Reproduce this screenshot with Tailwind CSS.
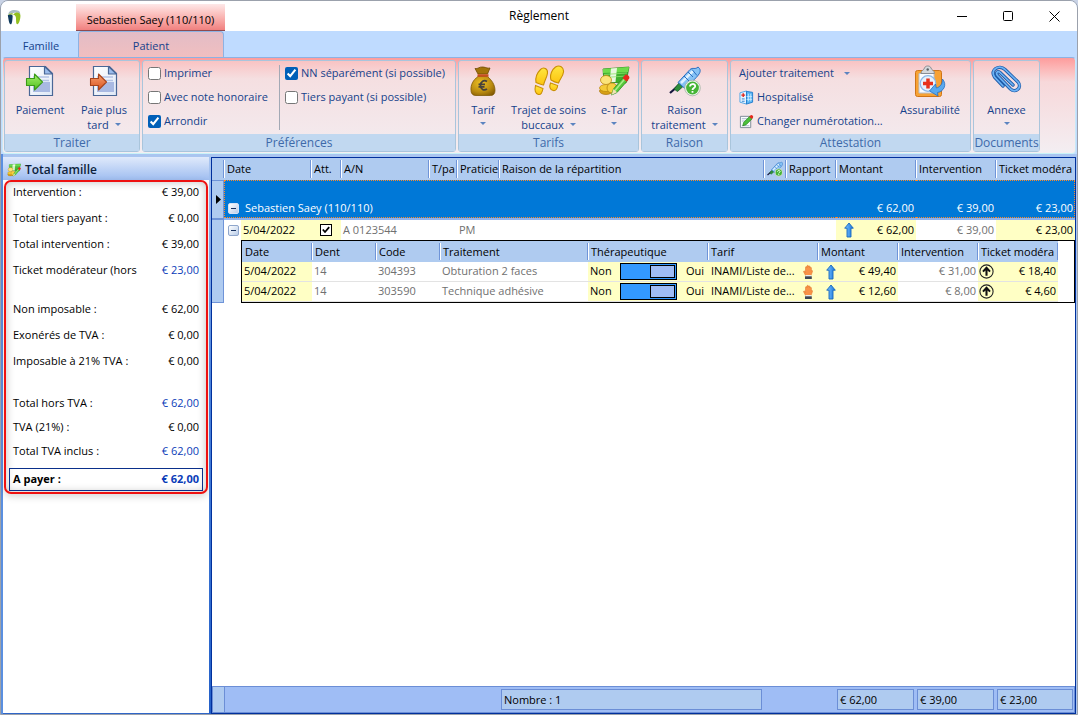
<!DOCTYPE html>
<html lang="fr">
<head>
    <meta charset="UTF-8">
    <meta name="viewport" content="width=device-width, initial-scale=1.0">
    <title>Règlement</title>
    <script src="https://cdn.jsdelivr.net/npm/@tailwindcss/browser@4"></script>
</head>
<body class="h-screen overflow-hidden bg-[#c9d3e6] font-['Open_Sans','Noto_Sans',sans-serif] text-[11px] text-black">

<!-- Shared icons -->
<svg class="absolute size-0">
    <defs>
        <linearGradient id="g-paper" x1="0" y1="0" x2="1" y2="1"><stop offset="0" stop-color="#fff"/><stop offset="1" stop-color="#dfe8f6"/></linearGradient>
        <linearGradient id="g-green" x1="0" y1="0" x2="0" y2="1"><stop offset="0" stop-color="#a6f06c"/><stop offset="1" stop-color="#4fc01e"/></linearGradient>
        <linearGradient id="g-orange" x1="0" y1="0" x2="0" y2="1"><stop offset="0" stop-color="#f9a070"/><stop offset="1" stop-color="#d9531f"/></linearGradient>
        <linearGradient id="g-blue" x1="0" y1="0" x2="1" y2="0"><stop offset="0" stop-color="#7cc4ff"/><stop offset="1" stop-color="#1673dc"/></linearGradient>
        <radialGradient id="g-bag" cx=".4" cy=".35" r=".8"><stop offset="0" stop-color="#edc024"/><stop offset=".6" stop-color="#b98a10"/><stop offset="1" stop-color="#7d5502"/></radialGradient>
        <linearGradient id="g-foot" x1="0" y1="0" x2="0" y2="1"><stop offset="0" stop-color="#ffe640"/><stop offset="1" stop-color="#fdc410"/></linearGradient>
    </defs>
    <symbol id="i-doc" viewBox="0 0 32 32">
        <path d="M5.500 1.500h16l7 7v22h-23z" fill="url(#g-paper)" stroke="#4a6796" stroke-width="1.200"/>
        <path d="M9 12h16M9 15.500h16" stroke="#b4c4e6" stroke-width="1.500"/>
        <path d="M9 17h17v10H9z" fill="#a9b9e2"/>
        <path d="M20.500 1.500v7.500h8z" fill="#9bbcec" stroke="#4a6796" stroke-width="1.200" stroke-linejoin="round"/>
    </symbol>
    <symbol id="i-arrow" viewBox="0 0 32 32">
        <path d="M2.500 13.500h8v-4.500l8 8-8 8v-4.500h-8z" stroke-width="1.100" stroke-linejoin="round"/>
    </symbol>
    <symbol id="i-money" viewBox="0 0 32 32">
        <path d="M5 4l26-2-3 16-22-1z" fill="#3daf2d" stroke="#25861c" stroke-width=".8"/>
        <path d="M5 4l26-2-1 5-25 1z" fill="#6ddb4b"/>
        <path d="M13 3.500l6-.5-1.500 14h-6z" fill="#e9f8df"/>
        <path d="M6 9.500l23-1.500M6 12.500l23-1.500" stroke="#8be06b" stroke-width=".8"/>
        <ellipse cx="8" cy="26" rx="6.500" ry="3.500" fill="#d79f14" stroke="#a8750a" stroke-width=".7"/>
        <ellipse cx="8" cy="23" rx="6.500" ry="3.500" fill="#f4cb38" stroke="#b8860c" stroke-width=".7"/>
        <ellipse cx="8" cy="15" rx="5.500" ry="4.500" fill="#fbe47a" stroke="#bd8a10" stroke-width=".8"/>
        <ellipse cx="14" cy="23" rx="5" ry="5" fill="#f6cf40" stroke="#b8860c" stroke-width=".8"/>
        <path d="M13.500 30l2-6 10.500-12.500 4 3.500-11 12.500z" fill="#57c83a" stroke="#2f8f22" stroke-width=".8"/>
        <path d="M17 25.500l10.500-12.500" stroke="#a9ef8c" stroke-width="1.500"/>
        <path d="M24.500 13l2.500-3c1.500-1.500 5.500 1.500 4.200 3.500l-2.500 3.200z" fill="#e5291d"/>
        <path d="M13.500 30l2-6 3.500 3.200z" fill="#f4e1b5"/>
    </symbol>
    <symbol id="i-syringe" viewBox="0 0 32 32">
        <path d="M1 28l8-7" stroke="#14143c" stroke-width="2.200"/>
        <path d="M5 24l5-6 4 3.500-5.500 5z" fill="#2d8f3a" stroke="#14532a" stroke-width=".8"/>
        <path d="M9 17.500L21 4.500c3-2.500 5 .5 8-2.500 3 2 2.500 5 1 7-1 2.500-14 14.500-14 14.500z" fill="#86c2f5" stroke="#2b6fc0" stroke-width="1"/>
        <path d="M12 18L24 6" stroke="#dff1ff" stroke-width="2.500"/>
        <path d="M19 7l5 5M23 4.500l5 6M15 11l5 5" stroke="#2b6fc0" stroke-width="1"/>
        <circle cx="23.500" cy="23" r="7.800" fill="#eef5ec" stroke="#9aa99a" stroke-width=".7"/>
        <circle cx="23.500" cy="23" r="6.400" fill="#46b536"/>
        <path d="M21 21.500c0-3.300 5.200-3.200 5.200-.3 0 1.800-2.700 1.800-2.700 3.700M23.500 26v1.800" stroke="#fff" stroke-width="1.800" fill="none"/>
    </symbol>
    <symbol id="i-up" viewBox="0 0 10 16">
        <path d="M5 1l4.300 5.200H7V15H3V6.200H.7z" fill="url(#g-blue)" stroke="#1766bd" stroke-width=".9" stroke-linejoin="round"/>
    </symbol>
    <symbol id="i-circle" viewBox="0 0 15 15">
        <circle cx="7.500" cy="7.500" r="6.600" fill="none" stroke="#222" stroke-width="1.100"/>
        <path d="M7.500 11.800V4M4 7.600l3.500-3.700L11 7.600" fill="none" stroke="#111" stroke-width="2.100"/>
    </symbol>
    <symbol id="i-hand" viewBox="0 0 10 16">
        <path d="M2.500 11.500L.7 8c-.5-1.100.8-1.500 1.300-.5l.5.800V3.500c0-1.200 1.300-1.200 1.400 0V2.300c.1-1.300 1.500-1.300 1.600 0v.4c.1-1.100 1.500-1.100 1.500.1v1.100c.2-1 1.400-1 1.400.2v3c.5-.9 1.400-.5 1.100.4L8 11.500z" fill="#f99347" stroke="#dc6c26" stroke-width=".5"/>
        <path d="M2.500 11h5.800v1.500H2.500z" fill="#e8edf2"/>
        <path d="M2 12.300h6.800V15H2z" fill="#3d4655"/>
    </symbol>
</svg>

<div class="flex h-full flex-col overflow-hidden rounded-t-lg border border-[#9ba1ac] bg-[#bfdbff]">

    <!-- Title bar -->
    <header class="relative flex h-[30px] shrink-0 items-stretch bg-white">
        <div class="w-[75px] shrink-0 pt-[7px] pl-1">
            <svg class="size-[18px]" viewBox="0 0 16 16">
                <path d="M3 5.500C3 2.500 7.500.5 12 2.500c1.500 1 1.500 2 1.500 3C11.500 3.500 8 4 3 5.500z" fill="#a9bcc4"/>
                <path d="M2.500 6.500c1.500-1.800 4.500-1 4.300 1S6.500 14.500 5 14.500 3 9 2.500 6.500z" fill="#103a5c"/>
                <path d="M2.800 6.500C4 4 7 4 8 6 6.500 5.200 4.500 5.200 2.800 6.500z" fill="#93c01f"/>
                <path d="M7.500 5.500c2-2.200 6-2 6.200 1S12.500 14.500 11 14.500s-1-4-1.300-6S8.500 6.500 7.500 5.500z" fill="#93c01f"/>
            </svg>
        </div>
        <div class="mt-[3px] flex w-[149px] items-center justify-center border-b border-[#8f4a4f] bg-linear-to-b from-[#fde8e8] to-[#f0807f] pt-1.5">Sebastien Saey (110/110)</div>
        <h1 class="pointer-events-none absolute inset-x-0 top-0 text-center text-xs leading-[30px]">Règlement</h1>
        <div class="ml-auto flex">
            <button aria-label="Réduire" class="flex w-[46px] items-center justify-center"><svg class="size-[11px]" viewBox="0 0 11 11"><path d="M0 5.500h10" stroke="#000"/></svg></button>
            <button aria-label="Agrandir" class="flex w-[46px] items-center justify-center"><svg class="size-[11px]" viewBox="0 0 11 11"><rect x=".5" y=".5" width="9" height="9" rx="1" fill="none" stroke="#000"/></svg></button>
            <button aria-label="Fermer" class="flex w-[46px] items-center justify-center"><svg class="size-[11px]" viewBox="0 0 11 11"><path d="M.5.500l10 10M10.500.500l-10 10" stroke="#000"/></svg></button>
        </div>
    </header>

    <!-- Ribbon tabs -->
    <nav class="flex h-[26px] shrink-0 items-stretch text-[11px] text-[#15428b]">
        <button class="w-20 pt-1 text-center">Famille</button>
        <button class="-ml-[3px] w-[146px] rounded-t border border-b-0 border-[#8db2e3] bg-linear-to-b from-[#e2bcc6] to-[#f1bfc0] pt-[3px]">Patient</button>
    </nav>

    <!-- Ribbon -->
    <div class="mx-px flex shrink-0 gap-0.5 rounded border border-t-[#8db2e3] border-r-[#c9e9f6] border-b-[#c9f3f8] border-l-[#c9e9f6] bg-linear-to-b from-[#fd9c9c] via-[#f7d8da] via-25% to-[#f3eef2] px-px pt-0.5 pb-px text-[#15428b]">

        <section class="flex w-[136px] flex-col rounded-[3px] border border-[#a9c5dc] bg-linear-to-b from-[#f9c3c3] via-[#f5dfe1] via-20% to-[#f3ecf0]">
            <div class="flex h-[73px] justify-center pt-1">
                <button class="flex w-16 flex-col items-center leading-[15px]">
                    <svg class="mb-[5px] size-8"><use href="#i-doc"/><use href="#i-arrow" fill="url(#g-green)" stroke="#3b9a18"/></svg>
                    Paiement
                </button>
                <button class="flex w-16 flex-col items-center leading-[15px]">
                    <svg class="mb-[5px] size-8"><use href="#i-doc"/><use href="#i-arrow" fill="url(#g-orange)" stroke="#a8431a"/></svg>
                    Paie plus
                    <span class="flex items-center gap-1.5">tard <i class="border-x-[3px] border-t-[3px] border-x-transparent border-t-[#5b84c0]"></i></span>
                </button>
            </div>
            <h2 class="bg-[#c1d8f0] text-center text-xs leading-[17px] text-[#3e6aaa]">Traiter</h2>
        </section>

        <section class="flex w-[314px] flex-col rounded-[3px] border border-[#a9c5dc] bg-linear-to-b from-[#f9c3c3] via-[#f5dfe1] via-20% to-[#f3ecf0]">
            <div class="flex h-[73px] gap-[5px] pl-[5px]">
                <div class="w-[126px]">
                    <label class="flex h-6 items-center gap-[3px]"><input type="checkbox" class="size-[13px] accent-[#005fb8]">Imprimer</label>
                    <label class="flex h-6 items-center gap-[3px] whitespace-nowrap"><input type="checkbox" class="size-[13px] accent-[#005fb8]">Avec note honoraire</label>
                    <label class="flex h-6 items-center gap-[3px]"><input type="checkbox" checked class="size-[13px] accent-[#005fb8]">Arrondir</label>
                </div>
                <div class="my-1 w-px bg-[#a3a9b5]"></div>
                <div>
                    <label class="flex h-6 items-center gap-[3px] whitespace-nowrap"><input type="checkbox" checked class="size-[13px] accent-[#005fb8]">NN séparément (si possible)</label>
                    <label class="flex h-6 items-center gap-[3px] whitespace-nowrap"><input type="checkbox" class="size-[13px] accent-[#005fb8]">Tiers payant (si possible)</label>
                </div>
            </div>
            <h2 class="bg-[#c1d8f0] text-center text-xs leading-[17px] text-[#3e6aaa]">Préférences</h2>
        </section>

        <section class="flex w-[181px] flex-col rounded-[3px] border border-[#a9c5dc] bg-linear-to-b from-[#f9c3c3] via-[#f5dfe1] via-20% to-[#f3ecf0]">
            <div class="flex h-[73px] justify-center pt-1">
                <button class="flex w-12 flex-col items-center leading-[15px]">
                    <svg class="mb-[5px] size-8" viewBox="0 0 32 32">
                        <path d="M11 9L8 3.500c3 .8 4-2 8-1.500s4 1.500 7 1L20.500 9z" fill="#a37409" stroke="#6f4a02" stroke-width=".8"/>
                        <path d="M11 11.500C6 15 3.500 20 4 25.500c.3 4 2.500 5 5 5h14.500c3 0 4.500-2 4.500-5 0-6-3.500-10.500-7.500-14z" fill="url(#g-bag)" stroke="#805a05" stroke-width=".8"/>
                        <path d="M10.500 9.300h11v2.500h-11z" fill="#c8501d"/>
                        <path d="M20 16.500c-3-2-6.500 0-6.500 4s3.500 5.500 6.500 3.500M11.500 19.300H18M11.500 21.800H17.500" fill="none" stroke="#46413c" stroke-width="1.800"/>
                    </svg>
                    Tarif
                    <i class="mt-[5px] border-x-[3px] border-t-[3px] border-x-transparent border-t-[#5b84c0]"></i>
                </button>
                <button class="flex w-[84px] flex-col items-center leading-[15px] whitespace-nowrap">
                    <svg class="mb-[5px] size-8" viewBox="0 0 32 32">
                        <g fill="url(#g-foot)" stroke="#c98f06" stroke-width="1.100">
                            <path d="M7.500 4.500c3-3 7.500-1 7 3.500-.4 4-2.500 6.500-4 12-2-.3-5-1.500-7.500-2.500C2 12 4.500 7.500 7.500 4.500z"/>
                            <path d="M2.500 20.500l7.500 3c-.8 4-2 6.500-4.500 6-3.500-.6-4-4.500-3-9z"/>
                            <path d="M22.500 2c4-2.500 8.500 0 8 5-.3 4-3.500 7-5 11-2.500-.5-5-1.500-7.500-3C16.500 10 19 4.500 22.500 2z"/>
                            <path d="M17.500 18l7.200 2.500c-.5 3.500-2 5.500-4.500 5-3.500-.7-4-4-2.700-7.500z"/>
                        </g>
                    </svg>
                    Trajet de soins
                    <span class="flex items-center gap-1.5">buccaux <i class="border-x-[3px] border-t-[3px] border-x-transparent border-t-[#5b84c0]"></i></span>
                </button>
                <button class="flex w-12 flex-col items-center leading-[15px]">
                    <svg class="mb-[5px] size-8"><use href="#i-money"/></svg>
                    e-Tar
                    <i class="mt-[5px] border-x-[3px] border-t-[3px] border-x-transparent border-t-[#5b84c0]"></i>
                </button>
            </div>
            <h2 class="bg-[#c1d8f0] text-center text-xs leading-[17px] text-[#3e6aaa]">Tarifs</h2>
        </section>

        <section class="flex w-[87px] flex-col rounded-[3px] border border-[#a9c5dc] bg-linear-to-b from-[#f9c3c3] via-[#f5dfe1] via-20% to-[#f3ecf0]">
            <div class="flex h-[73px] justify-center pt-1">
                <button class="flex flex-col items-center leading-[15px]">
                    <svg class="mb-[5px] size-8"><use href="#i-syringe"/></svg>
                    Raison
                    <span class="flex items-center gap-1.5">traitement <i class="border-x-[3px] border-t-[3px] border-x-transparent border-t-[#5b84c0]"></i></span>
                </button>
            </div>
            <h2 class="bg-[#c1d8f0] text-center text-xs leading-[17px] text-[#3e6aaa]">Raison</h2>
        </section>

        <section class="flex w-[241px] flex-col rounded-[3px] border border-[#a9c5dc] bg-linear-to-b from-[#f9c3c3] via-[#f5dfe1] via-20% to-[#f3ecf0]">
            <div class="flex h-[73px] justify-between pr-2.5 pl-2">
                <div>
                    <button class="flex h-6 items-center gap-2.5">Ajouter traitement <i class="border-x-[3px] border-t-[3px] border-x-transparent border-t-[#5b84c0]"></i></button>
                    <button class="flex h-6 items-center gap-[3px]">
                        <svg class="size-[15px]" viewBox="0 0 16 16">
                            <path d="M1 3l7-2v14l-7-2z" fill="#e4f3ff" stroke="#4fa4e4"/>
                            <path d="M8 1.500l6.500 1v10.500L8 15z" fill="#58b6f5" stroke="#237ccc"/>
                            <path d="M10 4v8M12.500 4v8M8 7h6M8 10h6" stroke="#d8efff" stroke-width=".8"/>
                            <path d="M2.500 5.500h4M4.500 3.500v4" stroke="#e02b20" stroke-width="1.500"/>
                            <path d="M3 9.500h3M3 12h3" stroke="#2c7fd0"/>
                        </svg>
                        Hospitalisé
                    </button>
                    <button class="flex h-6 items-center gap-[3px] whitespace-nowrap">
                        <svg class="size-[15px]" viewBox="0 0 16 16">
                            <path d="M1.500 2.500h11v12h-11z" fill="#fbfcfe" stroke="#7a8794"/>
                            <path d="M3 5h6M3 7.500h4M3 12.500h8" stroke="#a8b6ca"/>
                            <path d="M4 12.500l1-3.500 6.500-6.500 2.500 2.500L7.500 11.500z" fill="#4cc13b" stroke="#25851c" stroke-width=".8"/>
                            <path d="M11 3l1.500-1.800c1-.8 3.300 1.300 2.500 2.300L13.500 5.300z" fill="#e5291d"/>
                        </svg>
                        Changer numérotation...
                    </button>
                </div>
                <button class="flex flex-col items-center pt-1 leading-[15px]">
                    <svg class="mb-[5px] size-8" viewBox="0 0 32 32">
                        <rect x="1.500" y="5.500" width="26" height="26" rx="2" fill="#f7a234" stroke="#cf7417"/>
                        <path d="M5 8.500h15v19.500H5z" fill="#fafcff" stroke="#b6bdc8"/>
                        <path d="M7 8.500C7 5 10 5.500 10.500 3c.8-2.700 5.700-2.700 6.500 0 .5 2.500 3.500 2 3.500 5.500z" fill="#d5d8dc" stroke="#83878d" stroke-width=".9"/>
                        <circle cx="13.700" cy="4.500" r="1.200" fill="#5c6066"/>
                        <circle cx="14" cy="18.500" r="7.800" fill="#e7f1fc" stroke="#8ab8ea" stroke-width="1.200"/>
                        <path d="M9 18.500h10M14 13.500v10" stroke="#e8321c" stroke-width="3.500"/>
                        <path d="M28.500 14c5 6 1 12.500-5 13.500l.5 3.500-8.500-5 6-7 .8 4c3.500-.8 6.500-4 6.200-9z" fill="#5aa9ee" stroke="#2570c4" stroke-width=".8"/>
                    </svg>
                    Assurabilité
                </button>
            </div>
            <h2 class="bg-[#c1d8f0] text-center text-xs leading-[17px] text-[#3e6aaa]">Attestation</h2>
        </section>

        <section class="flex w-[67px] flex-col rounded-[3px] border border-[#a9c5dc] bg-linear-to-b from-[#f9c3c3] via-[#f5dfe1] via-20% to-[#f3ecf0]">
            <div class="flex h-[73px] justify-center pt-1">
                <button class="flex flex-col items-center leading-[15px]">
                    <svg class="mb-[5px] size-8" viewBox="0 0 32 32">
                        <g fill="none" stroke-linecap="round" stroke-linejoin="round">
                            <path d="M22 20L9 7.500C6.500 5.500 4.500 8 6.500 10.500L19.500 24c5 4.500 12-1.500 7.500-7L14 4.500C8-1 -1.500 5 3.500 12L12 21" stroke="#1e5aa8" stroke-width="3.400"/>
                            <path d="M22 20L9 7.500C6.500 5.500 4.500 8 6.500 10.500L19.500 24c5 4.500 12-1.500 7.500-7L14 4.500C8-1 -1.500 5 3.500 12L12 21" stroke="#6db3f5" stroke-width="1.700"/>
                        </g>
                    </svg>
                    Annexe
                    <i class="mt-[5px] border-x-[3px] border-t-[3px] border-x-transparent border-t-[#5b84c0]"></i>
                </button>
            </div>
            <h2 class="bg-[#c1d8f0] text-center text-xs leading-[17px] text-[#3e6aaa]">Documents</h2>
        </section>
    </div>

    <!-- Work area -->
    <main class="flex min-h-0 flex-1 border-l-2 border-[#5a8fe0] bg-[#a9c5f0] pt-[3px] pr-px">

        <!-- Family totals -->
        <aside class="flex w-[206px] shrink-0 flex-col border-b border-[#2f66c8] bg-white">
            <h2 class="flex h-[23px] shrink-0 items-center gap-1 bg-linear-to-b from-[#e0eafb] to-[#9fbdf0] pt-0.5 pl-1 text-xs font-semibold text-[#0d1f3c]">
                <svg class="size-3.5"><use href="#i-money"/></svg>
                Total famille
            </h2>
            <dl class="mx-px rounded-[7px] border-2 border-[#ee1111] bg-white px-[3px] pb-px shadow-[inset_0_0_8px_#00000040,0_3px_7px_#00000026]">
                <div class="space-y-1.5 px-1 leading-5">
                    <div class="flex justify-between"><dt>Intervention :</dt><dd>€ 39,00</dd></div>
                    <div class="flex justify-between"><dt>Total tiers payant :</dt><dd>€ 0,00</dd></div>
                    <div class="flex justify-between"><dt>Total intervention :</dt><dd>€ 39,00</dd></div>
                    <div class="flex justify-between"><dt>Ticket modérateur (hors</dt><dd class="text-[#0a3cb8]">€ 23,00</dd></div>
                </div>
                <div class="mt-[19px] space-y-1.5 px-1 leading-5">
                    <div class="flex justify-between"><dt>Non imposable :</dt><dd>€ 62,00</dd></div>
                    <div class="flex justify-between"><dt>Exonérés de TVA :</dt><dd>€ 0,00</dd></div>
                    <div class="flex justify-between"><dt>Imposable à 21% TVA :</dt><dd>€ 0,00</dd></div>
                </div>
                <div class="mt-[22px] space-y-1 px-1 leading-5">
                    <div class="flex justify-between"><dt>Total hors TVA :</dt><dd class="text-[#0a3cb8]">€ 62,00</dd></div>
                    <div class="flex justify-between"><dt>TVA (21%) :</dt><dd>€ 0,00</dd></div>
                    <div class="flex justify-between"><dt>Total TVA inclus :</dt><dd class="text-[#0a3cb8]">€ 62,00</dd></div>
                </div>
                <div class="mt-[7px] flex h-[23px] items-center justify-between border border-[#0a2f8a] px-[3px] font-bold"><dt>A payer :</dt><dd class="text-[#0a3cb8]">€ 62,00</dd></div>
            </dl>
        </aside>
        <div class="w-0.5 shrink-0 bg-linear-to-b from-[#a9c5f0] via-[#4a82da] via-40% to-[#2460c8]"></div>

        <!-- Treatment grid -->
        <section class="flex min-w-0 flex-1 flex-col border border-[#00309c] bg-white">
            <table class="w-full table-fixed border-separate border-spacing-0 whitespace-nowrap">
                <colgroup>
                    <col class="w-3"><col class="w-[87px]"><col class="w-[30px]"><col class="w-[88px]"><col class="w-7"><col class="w-[42px]"><col><col class="w-[22px]"><col class="w-[50px]"><col class="w-20"><col class="w-20"><col class="w-[79px]">
                </colgroup>
                <thead>
                    <tr class="bg-[#afcbf0] text-left">
                        <th class="h-[22px] p-0"><div class="h-[18px] border-r border-[#6f94d8]"></div></th>
                        <th class="p-0 font-normal"><div class="h-[18px] overflow-hidden border-r border-l border-r-[#6f94d8] border-l-white pl-0.5 leading-[18px]">Date</div></th>
                        <th class="p-0 font-normal"><div class="h-[18px] overflow-hidden border-r border-l border-r-[#6f94d8] border-l-white pl-0.5 leading-[18px]">Att.</div></th>
                        <th class="p-0 font-normal"><div class="h-[18px] overflow-hidden border-r border-l border-r-[#6f94d8] border-l-white pl-0.5 leading-[18px]">A/N</div></th>
                        <th class="p-0 font-normal"><div class="h-[18px] overflow-hidden border-r border-l border-r-[#6f94d8] border-l-white pl-0.5 leading-[18px]">T/pa</div></th>
                        <th class="p-0 font-normal"><div class="h-[18px] overflow-hidden border-r border-l border-r-[#6f94d8] border-l-white pl-0.5 leading-[18px]">Praticie</div></th>
                        <th class="p-0 font-normal"><div class="h-[18px] overflow-hidden border-r border-l border-r-[#6f94d8] border-l-white pl-0.5 leading-[18px]">Raison de la répartition</div></th>
                        <th class="p-0 font-normal"><div class="flex h-[18px] items-center border-r border-l border-r-[#6f94d8] border-l-white pl-0.5"><svg class="size-4" role="img" aria-label="Raison"><use href="#i-syringe"/></svg></div></th>
                        <th class="p-0 font-normal"><div class="h-[18px] overflow-hidden border-r border-l border-r-[#6f94d8] border-l-white pl-0.5 leading-[18px]">Rapport</div></th>
                        <th class="p-0 font-normal"><div class="h-[18px] overflow-hidden border-r border-l border-r-[#6f94d8] border-l-white pl-0.5 leading-[18px]">Montant</div></th>
                        <th class="p-0 font-normal"><div class="h-[18px] overflow-hidden border-r border-l border-r-[#6f94d8] border-l-white pl-0.5 leading-[18px]">Intervention</div></th>
                        <th class="p-0 font-normal"><div class="h-[18px] overflow-hidden border-l border-l-white pl-0.5 leading-[18px]">Ticket modéra</div></th>
                    </tr>
                </thead>
                <tbody>
                    <!-- Patient group -->
                    <tr class="bg-[#0078d7] align-bottom leading-[18px] text-white">
                        <td class="border-t border-r border-[#6f94d8] bg-[#afcbf0] p-0 align-middle"><svg class="ml-1 h-[9px] w-[5px]" viewBox="0 0 5 9"><path d="M0 0l5 4.500L0 9z"/></svg></td>
                        <td colspan="8" class="h-[38px] border border-r-0 border-dotted border-[#ff8a28] p-0">
                            <div class="flex items-center gap-1.5 pl-[3px]">
                                <button aria-label="Réduire le groupe" class="flex size-[11px] items-center justify-center rounded-[2px] border border-[#d6e2f5] bg-linear-to-br from-white to-[#b9cce8]"><span class="h-px w-[5px] bg-[#16305f]"></span></button>
                                Sebastien Saey (110/110)
                            </div>
                        </td>
                        <td class="border-y border-dotted border-[#ff8a28] p-0 pr-0.5 text-right">€ 62,00</td>
                        <td class="border-y border-dotted border-[#ff8a28] p-0 pr-0.5 text-right">€ 39,00</td>
                        <td class="border border-l-0 border-dotted border-[#ff8a28] p-0 pr-px text-right">€ 23,00</td>
                    </tr>
                    <!-- Attestation -->
                    <tr class="text-[#707070]">
                        <td rowspan="2" class="border-t-2 border-r border-b border-[#6f94d8] bg-[#afcbf0] p-0"></td>
                        <td class="h-[22px] border-t-2 border-[#8fb2ee] p-0">
                            <div class="flex items-center">
                                <div class="w-[17px] pl-1"><button aria-label="Réduire" class="flex size-[11px] items-center justify-center rounded-[2px] border border-[#8fa6cc] bg-linear-to-br from-white to-[#b9cce8]"><span class="h-px w-[5px] bg-[#16305f]"></span></button></div>
                                <span class="flex-1 bg-[#ffffc5] pl-0.5 leading-5 text-black">5/04/2022</span>
                            </div>
                        </td>
                        <td class="border-t-2 border-[#8fb2ee] bg-[#ffffc5] p-0">
                            <label class="relative mx-auto block size-3">
                                <input type="checkbox" checked aria-label="Att." class="block size-3 appearance-none border border-black bg-white">
                                <svg class="absolute inset-0 size-3" viewBox="0 0 12 12"><path d="M2.800 5.500L5 8l4.200-4.800" fill="none" stroke="#000" stroke-width="1.800"/></svg>
                            </label>
                        </td>
                        <td class="border-t-2 border-[#8fb2ee] p-0 pl-0.5">A 0123544</td>
                        <td class="border-t-2 border-[#8fb2ee] p-0"></td>
                        <td class="border-t-2 border-[#8fb2ee] p-0 pl-0.5">PM</td>
                        <td class="border-t-2 border-[#8fb2ee] p-0"></td>
                        <td class="border-t-2 border-[#8fb2ee] p-0"></td>
                        <td class="border-t-2 border-[#8fb2ee] p-0"></td>
                        <td class="border-t-2 border-[#8fb2ee] bg-[#ffffc5] p-0 pr-0.5 text-black"><div class="flex items-center justify-between pl-2"><svg class="h-4 w-2.5"><use href="#i-up"/></svg>€ 62,00</div></td>
                        <td class="border-t-2 border-[#8fb2ee] p-0 pr-0.5 text-right">€ 39,00</td>
                        <td class="border-t-2 border-[#8fb2ee] bg-[#ffffc5] p-0 pr-0.5 text-right text-black">€ 23,00</td>
                    </tr>
                    <!-- Treatment lines -->
                    <tr>
                        <td colspan="11" class="p-0 pl-[17px]">
                            <div class="border border-black pr-4">
                                <table class="w-full table-fixed border-separate border-spacing-0">
                                    <colgroup>
                                        <col class="w-[70px]"><col class="w-16"><col class="w-16"><col><col class="w-[120px]"><col class="w-[110px]"><col class="w-20"><col class="w-20"><col class="w-20">
                                    </colgroup>
                                    <thead>
                                        <tr class="bg-[#afcbf0] text-left">
                                            <th class="h-[21px] p-0 font-normal"><div class="h-[17px] overflow-hidden border-r border-[#6f94d8] pl-[3px] leading-[17px]">Date</div></th>
                                            <th class="p-0 font-normal"><div class="h-[17px] overflow-hidden border-r border-l border-r-[#6f94d8] border-l-white pl-0.5 leading-[17px]">Dent</div></th>
                                            <th class="p-0 font-normal"><div class="h-[17px] overflow-hidden border-r border-l border-r-[#6f94d8] border-l-white pl-0.5 leading-[17px]">Code</div></th>
                                            <th class="p-0 font-normal"><div class="h-[17px] overflow-hidden border-r border-l border-r-[#6f94d8] border-l-white pl-0.5 leading-[17px]">Traitement</div></th>
                                            <th class="p-0 font-normal"><div class="h-[17px] overflow-hidden border-r border-l border-r-[#6f94d8] border-l-white pl-0.5 leading-[17px]">Thérapeutique</div></th>
                                            <th class="p-0 font-normal"><div class="h-[17px] overflow-hidden border-r border-l border-r-[#6f94d8] border-l-white pl-0.5 leading-[17px]">Tarif</div></th>
                                            <th class="p-0 font-normal"><div class="h-[17px] overflow-hidden border-r border-l border-r-[#6f94d8] border-l-white pl-0.5 leading-[17px]">Montant</div></th>
                                            <th class="p-0 font-normal"><div class="h-[17px] overflow-hidden border-r border-l border-r-[#6f94d8] border-l-white pl-0.5 leading-[17px]">Intervention</div></th>
                                            <th class="p-0 font-normal"><div class="h-[17px] overflow-hidden border-r border-l border-r-[#6f94d8] border-l-white pl-0.5 leading-[17px]">Ticket modéra</div></th>
                                        </tr>
                                    </thead>
                                    <tbody class="text-[#707070]">
                                        <tr>
                                            <td class="h-5 border-b border-[#e3e3e3] bg-[#ffffc5] p-0 pl-0.5 text-black">5/04/2022</td>
                                            <td class="border-b border-[#e3e3e3] p-0 pl-0.5">14</td>
                                            <td class="border-b border-[#e3e3e3] p-0 pl-0.5">304393</td>
                                            <td class="border-b border-[#e3e3e3] p-0 pl-0.5">Obturation 2 faces</td>
                                            <td class="border-b border-[#e3e3e3] bg-[#ffffc5] p-0 pr-1 pl-0.5 text-black"><label class="flex items-center justify-between">Non <input type="checkbox" role="switch" checked class="flex h-[17px] w-[57px] appearance-none justify-end border border-black bg-[#3399ff] p-px before:w-[25px] before:border before:border-black before:bg-[#a0bdf5] before:content-['']"> <span>Oui</span></label></td>
                                            <td class="border-b border-[#e3e3e3] bg-[#ffffc5] p-0 px-[3px] text-black"><div class="flex items-center justify-between">INAMI/Liste de...<svg class="mr-0.5 h-4 w-2.5"><use href="#i-hand"/></svg></div></td>
                                            <td class="border-b border-[#e3e3e3] bg-[#ffffc5] p-0 pr-0.5 text-black"><div class="flex items-center justify-between pl-2"><svg class="h-4 w-2.5"><use href="#i-up"/></svg>€ 49,40</div></td>
                                            <td class="border-b border-[#e3e3e3] p-0 pr-0.5 text-right">€ 31,00</td>
                                            <td class="border-b border-[#e3e3e3] bg-[#ffffc5] p-0 pr-0.5 text-black"><div class="flex items-center justify-between pl-px"><svg class="size-[15px]"><use href="#i-circle"/></svg>€ 18,40</div></td>
                                        </tr>
                                        <tr>
                                            <td class="h-5 border-b border-[#e3e3e3] bg-[#ffffc5] p-0 pl-0.5 text-black">5/04/2022</td>
                                            <td class="border-b border-[#e3e3e3] p-0 pl-0.5">14</td>
                                            <td class="border-b border-[#e3e3e3] p-0 pl-0.5">303590</td>
                                            <td class="border-b border-[#e3e3e3] p-0 pl-0.5">Technique adhésive</td>
                                            <td class="border-b border-[#e3e3e3] bg-[#ffffc5] p-0 pr-1 pl-0.5 text-black"><label class="flex items-center justify-between">Non <input type="checkbox" role="switch" checked class="flex h-[17px] w-[57px] appearance-none justify-end border border-black bg-[#3399ff] p-px before:w-[25px] before:border before:border-black before:bg-[#a0bdf5] before:content-['']"> <span>Oui</span></label></td>
                                            <td class="border-b border-[#e3e3e3] bg-[#ffffc5] p-0 px-[3px] text-black"><div class="flex items-center justify-between">INAMI/Liste de...<svg class="mr-0.5 h-4 w-2.5"><use href="#i-hand"/></svg></div></td>
                                            <td class="border-b border-[#e3e3e3] bg-[#ffffc5] p-0 pr-0.5 text-black"><div class="flex items-center justify-between pl-2"><svg class="h-4 w-2.5"><use href="#i-up"/></svg>€ 12,60</div></td>
                                            <td class="border-b border-[#e3e3e3] p-0 pr-0.5 text-right">€ 8,00</td>
                                            <td class="border-b border-[#e3e3e3] bg-[#ffffc5] p-0 pr-0.5 text-black"><div class="flex items-center justify-between pl-px"><svg class="size-[15px]"><use href="#i-circle"/></svg>€ 4,60</div></td>
                                        </tr>
                                    </tbody>
                                </table>
                            </div>
                        </td>
                    </tr>
                </tbody>
            </table>

            <!-- Grid summary -->
            <footer class="mt-auto flex h-[27px] shrink-0 items-stretch border border-[#6b8ed6] bg-[#9fbdf5] pr-px leading-5">
                <div class="w-3 shrink-0 border-r border-[#6b8ed6] bg-[#afcbf0]"></div>
                <div class="my-0.5 ml-[276px] w-[261px] border border-[#6b8ed6] bg-[#afcbf0] pl-0.5">Nombre : 1</div>
                <div class="my-0.5 ml-auto w-[77px] border border-[#6b8ed6] bg-[#afcbf0] pl-0.5">€ 62,00</div>
                <div class="my-0.5 ml-[3px] w-[77px] border border-[#6b8ed6] bg-[#afcbf0] pl-0.5">€ 39,00</div>
                <div class="my-0.5 ml-[3px] w-[76px] border border-[#6b8ed6] bg-[#afcbf0] pl-0.5">€ 23,00</div>
            </footer>
        </section>
    </main>
</div>
</body>
</html>
